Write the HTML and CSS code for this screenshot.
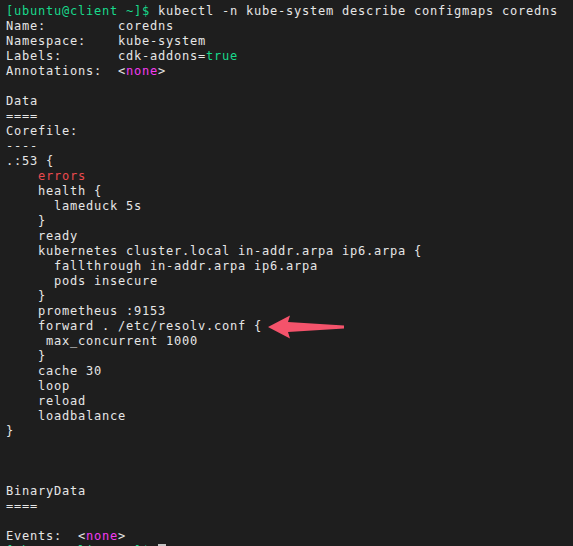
FILE: index.html
```html
<!DOCTYPE html>
<html>
<head>
<meta charset="utf-8">
<link rel="stylesheet" href="styles.css">
</head>
<body>
<div class="term">
<pre class="out"><span class="g">[ubuntu@client ~]$ </span>kubectl -n kube-system describe configmaps coredns
Name:         coredns
Namespace:    kube-system
Labels:       cdk-addons=<span class="g">true</span>
Annotations:  &lt;<span class="m">none</span>&gt;

Data
====
Corefile:
----
.:53 {
    <span class="r">errors</span>
    health {
      lameduck 5s
    }
    ready
    kubernetes cluster.local in-addr.arpa ip6.arpa {
      fallthrough in-addr.arpa ip6.arpa
      pods insecure
    }
    prometheus :9153
    forward . /etc/resolv.conf {
     max_concurrent 1000
    }
    cache 30
    loop
    reload
    loadbalance
}



BinaryData
====

Events:  &lt;<span class="m">none</span>&gt;
<span class="g">[ubuntu@client ~]$ </span><span class="cursor"> </span></pre>
<svg class="arrow" width="80" height="26" viewBox="0 0 80 26">
  <path d="M1 12 L23 0.5 L21 7 L77 10.5 L77 13.5 L21 17 L23 23.5 Z" fill="#f4536b"/>
</svg>
</div>
</body>
</html>
```
FILE: styles.css
```css
html, body {
  margin: 0;
  padding: 0;
  background: #1e1e1e;
  overflow: hidden;
}
.term {
  position: relative;
  width: 573px;
  height: 546px;
  overflow: hidden;
  background: #1e1e1e;
}
.out {
  margin: 0;
  padding: 4px 0 0 6px;
  font-family: "DejaVu Sans Mono", monospace;
  font-size: 12px;
  letter-spacing: 0.775px;
  line-height: 15px;
  color: #e6e6e6;
}
.g { color: #18d98b; }
.r { color: #ea4a4e; }
.m { color: #f23cf0; }
.cursor {
  background: #c4c4c4;
}
.arrow {
  position: absolute;
  left: 267px;
  top: 315px;
}
```
